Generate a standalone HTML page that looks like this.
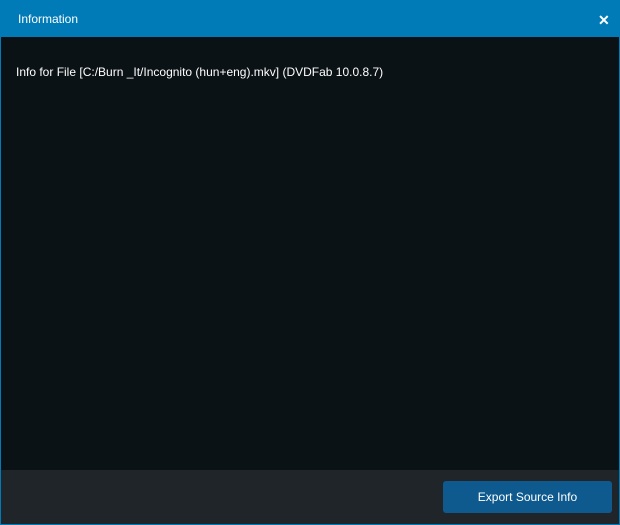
<!DOCTYPE html>
<html><head><style>
html,body{margin:0;padding:0;width:620px;height:525px;overflow:hidden;background:#007bb8;font-family:"Liberation Sans",Arial,sans-serif;}
.hdr{position:absolute;left:0;top:0;width:620px;height:37px;background:#007bb8;}
.title{position:absolute;left:18px;top:12px;color:#fff;font-size:12px;}
.x{position:absolute;left:598px;top:13px;color:#fff;font-size:14px;font-weight:bold;line-height:14px;}
.body{position:absolute;left:1px;top:37px;width:618px;height:433px;background:#0b1216;}
.info{position:absolute;left:16px;top:65px;color:#fff;font-size:12px;}
.foot{position:absolute;left:1px;top:470px;width:618px;height:54px;background:#1f2529;}
.btn{position:absolute;left:443px;top:481px;width:169px;height:32px;background:#0e5a8e;border-radius:3px;color:#fff;font-size:12px;text-align:center;line-height:32px;}
</style></head><body>
<div class="hdr"><div class="title">Information</div><div class="x">✕</div></div>
<div class="body"></div>
<div class="info">Info for File [C:/Burn _It/Incognito (hun+eng).mkv] (DVDFab 10.0.8.7)</div>
<div class="foot"></div>
<div class="btn">Export Source Info</div>
</body></html>
